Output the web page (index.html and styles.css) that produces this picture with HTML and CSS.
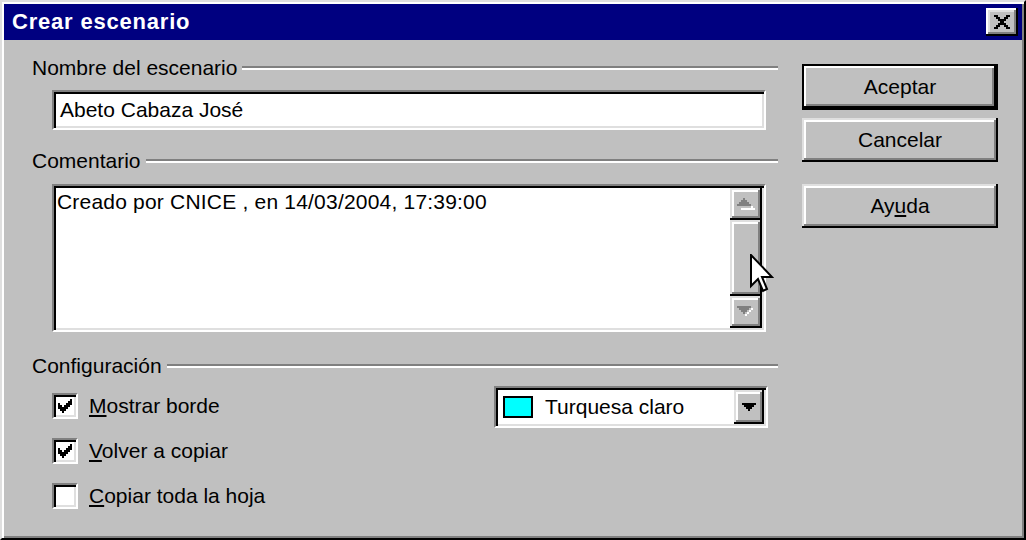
FILE: index.html
```html
<!DOCTYPE html>
<html lang="es">
<head>
    <meta charset="UTF-8">
    <title>Crear escenario</title>
    <link rel="stylesheet" href="styles.css">
</head>
<body>
    <div class="dialog">
        <div class="titlebar">
            <span class="title">Crear escenario</span>
            <button class="close" type="button">
                <svg width="16" height="14" viewBox="0 0 8 7" shape-rendering="crispEdges">
                    <path d="M0 0h2v1h-2z M6 0h2v1h-2z M1 1h2v1h-2z M5 1h2v1h-2z M2 2h4v1h-4z M3 3h2v1h-2z M2 4h4v1h-4z M1 5h2v1h-2z M5 5h2v1h-2z M0 6h2v1h-2z M6 6h2v1h-2z" fill="#000"/>
                </svg>
            </button>
        </div>

        <div class="content">
            <div class="main">
                <div class="group-label"><span>Nombre del escenario</span></div>
                <div class="field">Abeto Cabaza José</div>

                <div class="group-label gap-top"><span>Comentario</span></div>
                <div class="memo">
                    <div class="memo-text">Creado por CNICE , en 14/03/2004, 17:39:00</div>
                    <div class="scrollbar">
                        <div class="sb-btn">
                            <svg width="18" height="12" viewBox="0 0 9 6" shape-rendering="crispEdges">
                                <path d="M4 1h1v1h1v1h1v1h1v1h-1v-1h-1v-1h-1v-1h-1z M2 5h7v1h-7z" fill="#fff"/>
                                <path d="M3 0h1v1h1v1h1v1h1v1H0V3h1V2h1V1h1z" fill="#808080"/>
                            </svg>
                        </div>
                        <div class="sb-thumb"></div>
                        <div class="sb-btn">
                            <svg width="18" height="12" viewBox="0 0 9 6" shape-rendering="crispEdges">
                                <path d="M7 1h1v1h-1z M6 2h1v1h-1z M5 3h1v1h-1z M4 4h1v1h-1z" fill="#fff"/>
                                <path d="M0 0h7v1h-1v1h-1v1h-1v1h-1v-1h-1v-1h-1v-1h-1z" fill="#808080"/>
                            </svg>
                        </div>
                    </div>
                </div>

                <div class="group-label gap-top-lg"><span>Configuración</span></div>
                <div class="config">
                    <div class="checks">
                        <div class="check">
                            <span class="box">
                                <svg width="18" height="18" viewBox="0 0 9 9" shape-rendering="crispEdges">
                                    <path d="M7 1h1v1h-1z M6 2h2v1h-2z M1 3h1v1h-1z M5 3h3v1h-3z M1 4h2v1h-2z M4 4h3v1h-3z M1 5h5v1h-5z M2 6h3v1h-3z M3 7h1v1h-1z" fill="#000"/>
                                </svg>
                            </span>
                            <span><u>M</u>ostrar borde</span>
                        </div>
                        <div class="check">
                            <span class="box">
                                <svg width="18" height="18" viewBox="0 0 9 9" shape-rendering="crispEdges">
                                    <path d="M7 1h1v1h-1z M6 2h2v1h-2z M1 3h1v1h-1z M5 3h3v1h-3z M1 4h2v1h-2z M4 4h3v1h-3z M1 5h5v1h-5z M2 6h3v1h-3z M3 7h1v1h-1z" fill="#000"/>
                                </svg>
                            </span>
                            <span><u>V</u>olver a copiar</span>
                        </div>
                        <div class="check">
                            <span class="box"></span>
                            <span><u>C</u>opiar toda la hoja</span>
                        </div>
                    </div>

                    <div class="combo">
                        <span class="swatch"></span>
                        <span class="combo-text">Turquesa claro</span>
                        <span class="combo-btn">
                            <svg width="14" height="8" viewBox="0 0 7 4" shape-rendering="crispEdges">
                                <path d="M0 0h7v1h-1v1h-1v1h-1v1h-1v-1h-1v-1h-1v-1h-1z" fill="#000"/>
                            </svg>
                        </span>
                    </div>
                </div>
            </div>

            <div class="buttons">
                <button class="btn btn-default" type="button">Aceptar</button>
                <button class="btn" type="button">Cancelar</button>
                <button class="btn btn-help" type="button">Ay<u>u</u>da</button>
            </div>
        </div>

        <!-- puntero del ratón sobre la barra de desplazamiento -->
        <svg class="cursor" width="24" height="40" viewBox="0 0 12 20">
            <path d="M0.5 0.5 V16 L4 12.5 L6.5 18.5 L8.5 17.5 L6 11.5 H11 Z" fill="#fff" stroke="#000" stroke-width="1" stroke-linejoin="miter"/>
        </svg>
    </div>
</body>
</html>
```

FILE: styles.css
```css
* {
    box-sizing: border-box;
}

body {
    margin: 0;
    background: #c0c0c0;
    font-family: "Liberation Sans", Arial, sans-serif;
    font-size: 21px;
    color: #000;
}

.dialog {
    position: relative;
    width: 1026px;
    height: 540px;
    background: #c0c0c0;
    border: 2px solid;
    border-color: #dfdfdf #000 #000 #dfdfdf;
    box-shadow: inset 2px 2px #fff, inset -2px -2px #808080;
    padding: 2px;
}

.titlebar {
    display: flex;
    align-items: center;
    justify-content: space-between;
    height: 36px;
    background: #000080;
    padding: 0 4px 0 8px;
}

.title {
    color: #fff;
    font-weight: bold;
    font-size: 22px;
    letter-spacing: 0.8px;
}

.close {
    width: 32px;
    height: 28px;
    padding: 0;
    border: none;
    background: #c0c0c0;
    display: flex;
    align-items: center;
    justify-content: center;
    box-shadow: inset -2px -2px #000, inset 2px 2px #fff, inset -4px -4px #808080, inset 4px 4px #dfdfdf;
}

.content {
    display: flex;
    gap: 24px;
    padding: 16px 0 0 26px;
}

.main {
    width: 748px;
}

.group-label {
    display: flex;
    align-items: center;
    gap: 5px;
    height: 24px;
    padding-left: 2px;
}

.group-label::after {
    content: "";
    flex: 1;
    height: 0;
    border-top: 2px solid #808080;
    border-bottom: 2px solid #fff;
}

.gap-top {
    margin-top: 19px;
}

.gap-top-lg {
    margin-top: 22px;
}

/* campos hundidos */
.field,
.memo,
.combo,
.box {
    border: 2px solid;
    border-color: #808080 #fff #fff #808080;
    box-shadow: inset 2px 2px #000, inset -2px -2px #dfdfdf;
    background: #fff;
}

.field {
    height: 40px;
    margin: 10px 12px 0 22px;
    padding: 0 6px;
    display: flex;
    align-items: center;
}

.memo {
    height: 148px;
    margin: 11px 12px 0 22px;
    padding: 2px;
    display: flex;
}

.memo-text {
    flex: 1;
    padding: 2px 0 2px 1px;
    line-height: 24px;
    letter-spacing: 0.2px;
}

.scrollbar {
    width: 32px;
    display: flex;
    flex-direction: column;
}

.sb-btn,
.sb-thumb,
.combo-btn,
.btn {
    background: #c0c0c0;
    box-shadow: inset -2px -2px #000, inset 2px 2px #dfdfdf, inset -4px -4px #808080, inset 4px 4px #fff;
}

.sb-btn {
    height: 32px;
    display: flex;
    align-items: center;
    justify-content: center;
}

.sb-thumb {
    flex: 1;
}

.config {
    display: flex;
    justify-content: space-between;
    align-items: flex-start;
    margin-top: 8px;
    padding: 0 10px 0 22px;
}

.checks {
    display: flex;
    flex-direction: column;
    gap: 19px;
    padding-top: 7px;
}

.check {
    display: flex;
    align-items: center;
    gap: 11px;
    height: 26px;
}

.box {
    width: 26px;
    height: 26px;
    display: flex;
    align-items: center;
    justify-content: center;
}

.combo {
    width: 274px;
    height: 42px;
    display: flex;
    align-items: center;
    padding: 2px;
}

.swatch {
    width: 30px;
    height: 22px;
    margin-left: 5px;
    background: #00ffff;
    border: 2px solid #000;
}

.combo-text {
    flex: 1;
    margin-left: 12px;
}

.combo-btn {
    width: 30px;
    height: 34px;
    display: flex;
    align-items: center;
    justify-content: center;
}

.buttons {
    display: flex;
    flex-direction: column;
    width: 196px;
    margin-top: 8px;
}

.btn {
    height: 44px;
    border: none;
    padding: 0;
    font: inherit;
    color: #000;
}

.btn + .btn {
    margin-top: 8px;
}

.btn-default {
    height: 46px;
    box-shadow: inset 0 0 0 2px #000, inset -4px -4px #000, inset 4px 4px #fff, inset -6px -6px #808080;
}

.btn.btn-help {
    margin-top: 22px;
}

.cursor {
    position: absolute;
    left: 748px;
    top: 252px;
}
```
